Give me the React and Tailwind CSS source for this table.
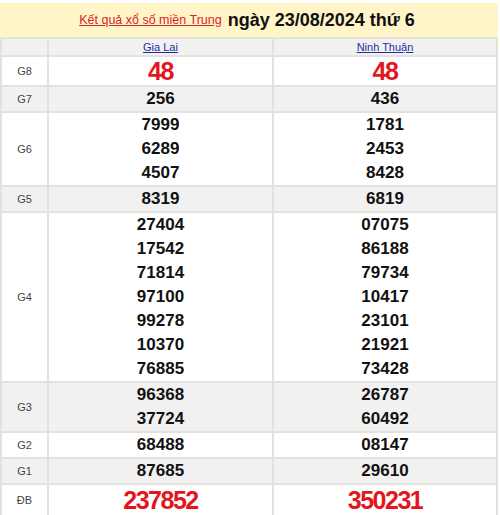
import React from 'react';

const rows = [
  { label: 'G8', a: ['48'], b: ['48'], red: true, h: 'h-[29px]', text: 'text-[25px] tracking-[-1.5px] leading-[28px]' },
  { label: 'G7', a: ['256'], b: ['436'] },
  { label: 'G6', a: ['7999', '6289', '4507'], b: ['1781', '2453', '8428'] },
  { label: 'G5', a: ['8319'], b: ['6819'] },
  {
    label: 'G4',
    a: ['27404', '17542', '71814', '97100', '99278', '10370', '76885'],
    b: ['07075', '86188', '79734', '10417', '23101', '21921', '73428'],
  },
  { label: 'G3', a: ['96368', '37724'], b: ['26787', '60492'] },
  { label: 'G2', a: ['68488'], b: ['08147'] },
  { label: 'G1', a: ['87685'], b: ['29610'] },
  { label: 'ĐB', a: ['237852'], b: ['350231'], red: true, text: 'text-[25px] tracking-[-1.5px] leading-[30px]' },
];

const NumCell = ({ nums, row }) => (
  <td className={`border-2 border-[#e4e2dd] text-center p-0 ${row.h || ''}`}>
    {nums.map((n) => (
      <div
        key={n}
        className={`font-bold ${row.red ? 'text-[#e3161f]' : 'text-[#111]'} ${row.text || 'text-[17px] leading-[24px]'}`}
      >
        {n}
      </div>
    ))}
  </td>
);

export default function App() {
  return (
    <div className="w-[500px] bg-white pt-[3px] font-['Liberation_Sans',Arial,sans-serif]">
      <div className="w-[498px] h-[34px] bg-[#fff5c9] flex items-center justify-center gap-[6px] pr-[4px]">
        <a href="#" className="text-[12.5px] text-[#d8232a] underline">Kết quả xổ số miền Trung</a>
        <span className="text-[18px] font-bold text-[#111]">ngày 23/08/2024 thứ 6</span>
      </div>
      <table className="w-[498px] border-collapse table-fixed">
        <colgroup>
          <col className="w-[47px]" />
          <col className="w-[225px]" />
          <col />
        </colgroup>
        <tbody>
          <tr className="bg-[#f1f1f1]">
            <td className="border-2 border-[#e4e2dd] h-[18px] p-0" />
            <td className="border-2 border-[#e4e2dd] text-center p-0 text-[11px] leading-[15px]">
              <a href="#" className="text-[#1f2fa3] underline">Gia Lai</a>
            </td>
            <td className="border-2 border-[#e4e2dd] text-center p-0 text-[11px] leading-[15px]">
              <a href="#" className="text-[#1f2fa3] underline">Ninh Thuận</a>
            </td>
          </tr>
          {rows.map((row, i) => (
            <tr key={row.label} className={i % 2 === 1 ? 'bg-[#f1f1f1]' : 'bg-white'}>
              <td className="border-2 border-[#e4e2dd] text-center p-0 text-[11px] text-[#444]">{row.label}</td>
              <NumCell nums={row.a} row={row} />
              <NumCell nums={row.b} row={row} />
            </tr>
          ))}
        </tbody>
      </table>
    </div>
  );
}
